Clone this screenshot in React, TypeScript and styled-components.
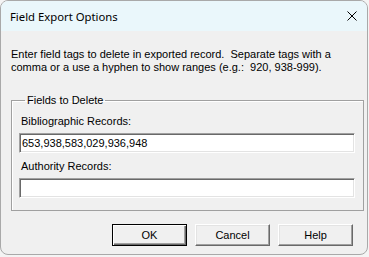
import React, { FC } from "react"
import styled, { createGlobalStyle } from "styled-components"

const GlobalStyle = createGlobalStyle`
  html, body {
    margin: 0;
    padding: 0;
    background: #f4f4f4;
  }
  * {
    box-sizing: border-box;
  }
`

const Window = styled.div`
  width: 368px;
  height: 255px;
  border: 1px solid #a9a9a9;
  border-radius: 8px;
  overflow: hidden;
  display: flex;
  flex-direction: column;
  background: #f0f0f0;
  font-family: "Liberation Sans", Arial, sans-serif;
  font-size: 11px;
  color: #000;
`

const TitleBar = styled.div`
  height: 30px;
  flex: none;
  display: flex;
  align-items: center;
  justify-content: space-between;
  padding: 0 10px 0 9px;
  background: #eaf7fb;
  font-family: "Noto Sans", "Open Sans", sans-serif;
  font-size: 11.3px;
`

const Title = styled.span`
  padding-top: 1px;
`

const CloseIcon = styled.svg`
  width: 10px;
  height: 10px;
  margin-right: 0;
`

const Body = styled.div`
  flex: 1;
  display: flex;
  flex-direction: column;
  padding: 17px 3px 0 10px;
`

const Intro = styled.p`
  margin: 0;
  line-height: 13px;
  white-space: pre;
`

const Group = styled.fieldset`
  margin: 20px 0 0 0;
  padding: 0 8px 12px 7px;
  border: 1px solid #a0a0a0;
  box-shadow: inset 1px 1px #fff;
  min-width: 0;
`

const Legend = styled.legend`
  margin-left: 6px;
  padding: 0 2px 0 2px;
  line-height: 13px;
`

const Label = styled.div<{ $gap: number }>`
  margin: ${p => p.$gap}px 0 5px 2px;
  line-height: 13px;
`

const Field = styled.input`
  display: block;
  width: 336px;
  height: 20px;
  margin: 0;
  padding: 0 0 0 2px;
  background: #fff;
  border: 1px solid;
  border-color: #a0a0a0 #fff #fff #a0a0a0;
  box-shadow: inset 1px 1px #696969, inset -1px -1px #e3e3e3;
  font-family: "Liberation Sans", Arial, sans-serif;
  font-size: 11px;
  color: #000;
  outline: none;
`

const Buttons = styled.div`
  display: flex;
  justify-content: flex-end;
  gap: 8px;
  margin-top: 13px;
  padding-right: 11px;
`

const Button = styled.button<{ $default?: boolean }>`
  width: 75px;
  height: 22px;
  margin: 0;
  padding: 0;
  background: #f0f0f0;
  border: 1px solid;
  border-color: ${p => (p.$default ? "#000" : "#fff #696969 #696969 #fff")};
  box-shadow: ${p =>
    p.$default
      ? "inset 1px 1px #fff, inset -1px -1px #696969, inset -2px -2px #a0a0a0"
      : "inset -1px -1px #a0a0a0, inset 1px 1px #e3e3e3"};
  font-family: "Liberation Sans", Arial, sans-serif;
  font-size: 11px;
  color: #000;
`

const App: FC = () => (
  <>
    <GlobalStyle />
    <Window>
      <TitleBar>
        <Title>Field Export Options</Title>
        <CloseIcon viewBox="0 0 10 10">
          <path d="M0.5 0.5 L9.5 9.5 M9.5 0.5 L0.5 9.5" stroke="#000" strokeWidth="1" />
        </CloseIcon>
      </TitleBar>
      <Body>
        <Intro>
          {"Enter field tags to delete in exported record.  Separate tags with a\ncomma or a use a hyphen to show ranges (e.g.:  920, 938-999)."}
        </Intro>
        <Group>
          <Legend>Fields to Delete</Legend>
          <Label $gap={8}>Bibliographic Records:</Label>
          <Field defaultValue="653,938,583,029,936,948" />
          <Label $gap={7}>Authority Records:</Label>
          <Field defaultValue="" />
        </Group>
        <Buttons>
          <Button $default>OK</Button>
          <Button>Cancel</Button>
          <Button>Help</Button>
        </Buttons>
      </Body>
    </Window>
  </>
)

export default App
